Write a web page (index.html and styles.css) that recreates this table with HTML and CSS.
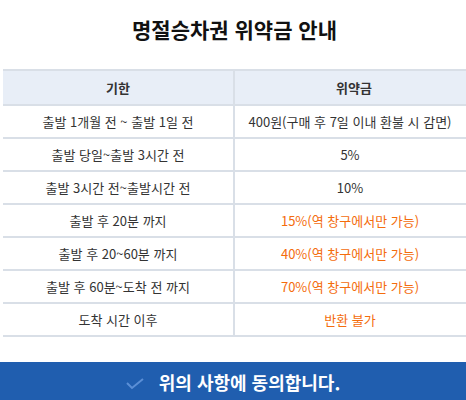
FILE: index.html
```html
<!DOCTYPE html>
<html lang="ko">
<head>
  <meta charset="UTF-8" />
  <meta name="viewport" content="width=device-width, initial-scale=1.0"/>
  <title>명절승차권 위약금 안내</title>
  <link rel="stylesheet" href="styles.css">
</head>
<body>

  <div class="container">
    <h1>명절승차권 위약금 안내</h1>

    <table class="fee-table">
      <thead>
        <tr>
          <th class="col-period">기한</th>
          <th>위약금</th>
        </tr>
      </thead>
      <tbody>
        <tr><td>출발 1개월 전 ~ 출발 1일 전</td><td>400원(구매 후 7일 이내 환불 시 감면)</td></tr>
        <tr><td>출발 당일~출발 3시간 전</td><td>5%</td></tr>
        <tr><td>출발 3시간 전~출발시간 전</td><td>10%</td></tr>
        <tr><td>출발 후 20분 까지</td><td class="warn">15%(역 창구에서만 가능)</td></tr>
        <tr><td>출발 후 20~60분 까지</td><td class="warn">40%(역 창구에서만 가능)</td></tr>
        <tr><td>출발 후 60분~도착 전 까지</td><td class="warn">70%(역 창구에서만 가능)</td></tr>
        <tr><td>도착 시간 이후</td><td class="warn">반환 불가</td></tr>
      </tbody>
    </table>
  </div>

  <button class="agree-btn">
    <svg class="check" width="18" height="12" viewBox="0 0 18 12">
      <polyline points="1,5 6,10 17,1" fill="none" stroke="#5b8fd6" stroke-width="2"/>
    </svg>
    위의 사항에 동의합니다.
  </button>

</body>
</html>
```

FILE: styles.css
```css
* { box-sizing: border-box; }

html, body {
  overflow: hidden;
}

body {
  margin: 0;
  background: #fff;
  color: #333;
  font-family: "Noto Sans CJK KR", "Noto Sans", sans-serif;
}

.container {
  padding: 0 0 0 3px;
}

h1 {
  margin: 0;
  height: 69px;
  padding-top: 14px;
  text-align: center;
  font-size: 21px;
  font-weight: bold;
  color: #111;
}

.fee-table {
  width: 470px;
  border-collapse: collapse;
  table-layout: fixed;
  font-size: 13px;
}

.fee-table th,
.fee-table td {
  text-align: center;
  border-top: 2px solid #d9dfe7;
  border-bottom: 2px solid #d9dfe7;
  padding: 0;
}

.fee-table th {
  height: 35px;
  background: #e8eef7;
  font-weight: bold;
  color: #333;
}

.fee-table td {
  height: 33px;
  color: #333;
}

.fee-table .col-period {
  width: 231px;
}

.fee-table th:first-child,
.fee-table td:first-child {
  border-right: 2px solid #d9dfe7;
}

.fee-table td:last-child {
  padding-right: 8px;
}

.fee-table .warn {
  color: #f46c0c;
}

.agree-btn {
  display: flex;
  align-items: center;
  justify-content: center;
  gap: 15px;
  width: 100%;
  height: 44px;
  margin-top: 25px;
  padding: 0 0 4px 0;
  border: none;
  background: #205eaf;
  color: #fff;
  font-family: "Noto Sans CJK KR", "Noto Sans", sans-serif;
  font-size: 18px;
  font-weight: bold;
}

.check {
  margin-top: 4px;
}
```
